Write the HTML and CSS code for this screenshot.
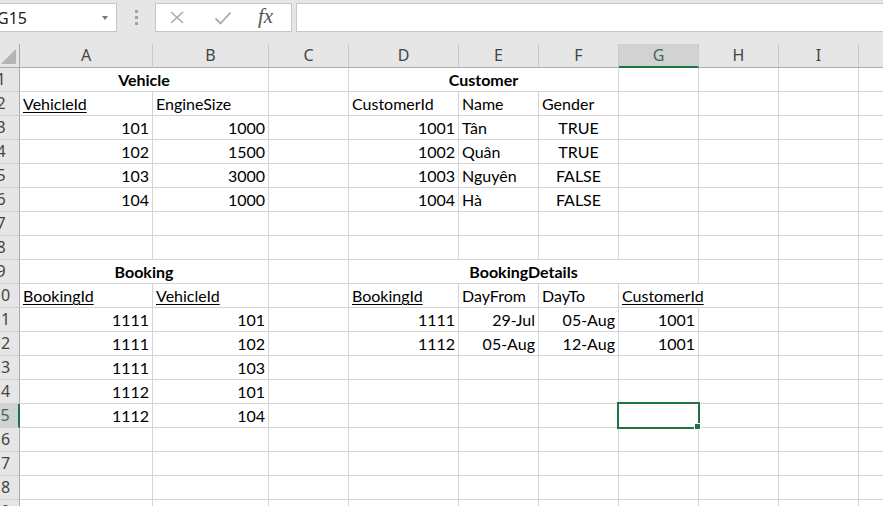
FILE: index.html
```html
<!DOCTYPE html>
<html>
<head>
<meta charset="utf-8">
<link rel="stylesheet" href="styles.css">
</head>
<body>
<div class="topbar">
  <div class="namebox"><span class="nb-text">G15</span><span class="nb-arrow"></span></div>
  <div class="dots"><i></i><i></i><i></i></div>
  <div class="iconbox">
    <svg class="ic-x" width="14" height="13" viewBox="0 0 14 13"><path d="M1 1 L13 12 M13 1 L1 12" stroke="#a9a9a9" stroke-width="1.6" fill="none"/></svg>
    <svg class="ic-check" width="18" height="14" viewBox="0 0 18 14"><path d="M1.5 7.5 L6.5 12.5 L16.5 1.5" stroke="#a9a9a9" stroke-width="1.8" fill="none"/></svg>
    <span class="ic-fx">fx</span>
  </div>
  <div class="formula"></div>
</div>
<div class="sheet">
  <div class="corner"><span class="tri"></span></div>
  <div class="ch">A</div><div class="ch">B</div><div class="ch">C</div><div class="ch">D</div><div class="ch">E</div><div class="ch">F</div><div class="ch chs">G</div><div class="ch">H</div><div class="ch">I</div><div class="ch"></div>

  <div class="rh">1</div><div class="c m2 b ctr">Vehicle</div><div class="c"></div><div class="c m3 b ctr">Customer</div><div class="c"></div><div class="c"></div><div class="c"></div><div class="c"></div>

  <div class="rh">2</div><div class="c"><span class="u">VehicleId</span></div><div class="c">EngineSize</div><div class="c"></div><div class="c">CustomerId</div><div class="c">Name</div><div class="c">Gender</div><div class="c"></div><div class="c"></div><div class="c"></div><div class="c"></div>

  <div class="rh">3</div><div class="c r">101</div><div class="c r">1000</div><div class="c"></div><div class="c r">1001</div><div class="c">Tân</div><div class="c ctr">TRUE</div><div class="c"></div><div class="c"></div><div class="c"></div><div class="c"></div>

  <div class="rh">4</div><div class="c r">102</div><div class="c r">1500</div><div class="c"></div><div class="c r">1002</div><div class="c">Quân</div><div class="c ctr">TRUE</div><div class="c"></div><div class="c"></div><div class="c"></div><div class="c"></div>

  <div class="rh">5</div><div class="c r">103</div><div class="c r">3000</div><div class="c"></div><div class="c r">1003</div><div class="c">Nguyên</div><div class="c ctr">FALSE</div><div class="c"></div><div class="c"></div><div class="c"></div><div class="c"></div>

  <div class="rh">6</div><div class="c r">104</div><div class="c r">1000</div><div class="c"></div><div class="c r">1004</div><div class="c">Hà</div><div class="c ctr">FALSE</div><div class="c"></div><div class="c"></div><div class="c"></div><div class="c"></div>

  <div class="rh">7</div><div class="c"></div><div class="c"></div><div class="c"></div><div class="c"></div><div class="c"></div><div class="c"></div><div class="c"></div><div class="c"></div><div class="c"></div><div class="c"></div>

  <div class="rh">8</div><div class="c"></div><div class="c"></div><div class="c"></div><div class="c"></div><div class="c"></div><div class="c"></div><div class="c"></div><div class="c"></div><div class="c"></div><div class="c"></div>

  <div class="rh">9</div><div class="c m2 b ctr">Booking</div><div class="c"></div><div class="c m4 b ctr">BookingDetails</div><div class="c"></div><div class="c"></div><div class="c"></div>

  <div class="rh">10</div><div class="c"><span class="u">BookingId</span></div><div class="c"><span class="u">VehicleId</span></div><div class="c"></div><div class="c"><span class="u">BookingId</span></div><div class="c">DayFrom</div><div class="c">DayTo</div><div class="c ovf"><span class="u">CustomerId</span></div><div class="c"></div><div class="c"></div><div class="c"></div>

  <div class="rh">11</div><div class="c r">1111</div><div class="c r">101</div><div class="c"></div><div class="c r">1111</div><div class="c r">29-Jul</div><div class="c r">05-Aug</div><div class="c r">1001</div><div class="c"></div><div class="c"></div><div class="c"></div>

  <div class="rh">12</div><div class="c r">1111</div><div class="c r">102</div><div class="c"></div><div class="c r">1112</div><div class="c r">05-Aug</div><div class="c r">12-Aug</div><div class="c r">1001</div><div class="c"></div><div class="c"></div><div class="c"></div>

  <div class="rh">13</div><div class="c r">1111</div><div class="c r">103</div><div class="c"></div><div class="c"></div><div class="c"></div><div class="c"></div><div class="c"></div><div class="c"></div><div class="c"></div><div class="c"></div>

  <div class="rh">14</div><div class="c r">1112</div><div class="c r">101</div><div class="c"></div><div class="c"></div><div class="c"></div><div class="c"></div><div class="c"></div><div class="c"></div><div class="c"></div><div class="c"></div>

  <div class="rh rhs">15</div><div class="c r">1112</div><div class="c r">104</div><div class="c"></div><div class="c"></div><div class="c"></div><div class="c"></div><div class="c sel"></div><div class="c"></div><div class="c"></div><div class="c"></div>

  <div class="rh">16</div><div class="c"></div><div class="c"></div><div class="c"></div><div class="c"></div><div class="c"></div><div class="c"></div><div class="c"></div><div class="c"></div><div class="c"></div><div class="c"></div>

  <div class="rh">17</div><div class="c"></div><div class="c"></div><div class="c"></div><div class="c"></div><div class="c"></div><div class="c"></div><div class="c"></div><div class="c"></div><div class="c"></div><div class="c"></div>

  <div class="rh">18</div><div class="c"></div><div class="c"></div><div class="c"></div><div class="c"></div><div class="c"></div><div class="c"></div><div class="c"></div><div class="c"></div><div class="c"></div><div class="c"></div>

  <div class="rh">19</div><div class="c"></div><div class="c"></div><div class="c"></div><div class="c"></div><div class="c"></div><div class="c"></div><div class="c"></div><div class="c"></div><div class="c"></div><div class="c"></div>
</div>
</body>
</html>
```
FILE: styles.css
```css
html, body {
  margin: 0;
  padding: 0;
  width: 883px;
  height: 506px;
  overflow: hidden;
  background: #ffffff;
}

.topbar {
  height: 44px;
  background: #e6e6e6;
  display: flex;
  align-items: flex-start;
  padding-top: 3px;
  box-sizing: border-box;
}

.namebox {
  margin-left: -10px;
  width: 127px;
  height: 29px;
  box-sizing: border-box;
  background: #fff;
  border: 1px solid #c6c6c6;
  display: flex;
  align-items: center;
  justify-content: space-between;
  padding: 0 8px 0 6px;
  font-family: "Noto Sans", sans-serif;
  font-size: 16px;
  color: #222;
}

.nb-arrow {
  width: 0;
  height: 0;
  border-left: 3.5px solid transparent;
  border-right: 3.5px solid transparent;
  border-top: 4px solid #777;
  margin-top: 1px;
}

.dots {
  width: 38px;
  height: 29px;
  display: flex;
  flex-direction: column;
  align-items: center;
  justify-content: center;
  gap: 3px;
}

.dots i {
  display: block;
  width: 3px;
  height: 3px;
  background: #a3a3a3;
}

.iconbox {
  width: 137px;
  height: 29px;
  box-sizing: border-box;
  background: #fff;
  border: 1px solid #c6c6c6;
  display: flex;
  align-items: center;
  padding-left: 14px;
}

.ic-check { margin-left: 30px; }

.ic-fx {
  margin-left: 26px;
  font-family: "Liberation Serif", serif;
  font-style: italic;
  font-size: 21px;
  color: #555;
  margin-top: -3px;
}

.formula {
  margin-left: 4px;
  flex: 1;
  height: 29px;
  box-sizing: border-box;
  background: #fff;
  border: 1px solid #c6c6c6;
  margin-right: -20px;
}

.sheet {
  margin-left: -17px;
  display: grid;
  grid-template-columns: 37px 133px 116px 80px 110px 80px 80px 80px 80px 80px 80px;
  grid-auto-rows: 24px;
}

.corner, .ch, .rh {
  background: #e6e6e6;
  box-sizing: border-box;
  font-family: "Noto Sans", sans-serif;
  font-size: 16px;
  line-height: 23px;
  color: #444;
  text-align: center;
}

.corner {
  position: relative;
  border-right: 1px solid #ababab;
  border-bottom: 1px solid #ababab;
}

.tri {
  position: absolute;
  right: 3px;
  bottom: 3px;
  width: 0;
  height: 0;
  border-left: 15px solid transparent;
  border-bottom: 15px solid #b4b4b4;
}

.ch {
  border-right: 1px solid #c9c9c9;
  border-bottom: 1px solid #ababab;
}

.chs {
  background: #d2d2d2;
  color: #3d6b52;
  border-bottom: 2px solid #217346;
}

.rh {
  border-right: 1px solid #ababab;
  border-bottom: 1px solid #cfcfcf;
}

.rhs {
  background: #d2d2d2;
  color: #3d6b52;
  border-right: 2px solid #217346;
}

.c {
  box-sizing: border-box;
  border-right: 1px solid #d4d4d4;
  border-bottom: 1px solid #d4d4d4;
  font-family: Lato, sans-serif;
  font-size: 16px;
  line-height: 23px;
  padding: 0 3px 0 3px;
  white-space: nowrap;
  color: #000;
}

.m2 { grid-column: span 2; }
.m3 { grid-column: span 3; }
.m4 { grid-column: span 4; }

.b { font-weight: bold; }
.r { text-align: right; }
.ctr { text-align: center; }

.u {
  text-decoration: underline;
  text-underline-offset: 2px;
  text-decoration-thickness: 1px;
}

.ovf {
  overflow: visible;
  border-right-color: transparent;
  position: relative;
  z-index: 1;
}

.sel {
  position: relative;
  z-index: 3;
}

.sel::after {
  content: "";
  position: absolute;
  left: -2px;
  top: -2px;
  width: 83px;
  height: 27px;
  box-sizing: border-box;
  border: 2px solid #217346;
}

.sel::before {
  content: "";
  position: absolute;
  left: 75px;
  top: 19px;
  width: 7px;
  height: 7px;
  box-sizing: border-box;
  background: #217346;
  border: 1px solid #fff;
  z-index: 4;
}
```
